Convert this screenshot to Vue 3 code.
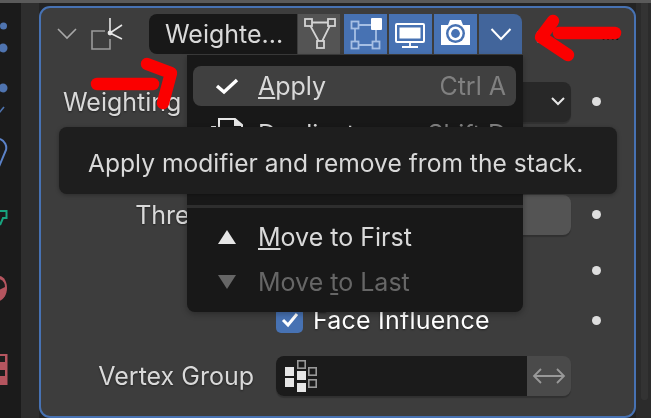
<template>
  <div class="screen">
    <div class="topline"></div>
    <div class="main">
      <div class="tabs">
        <svg width="21" height="415" viewBox="0 3 21 415">
          <circle cx="3.5" cy="26" r="3.5" fill="#4f74b0" />
          <circle cx="3" cy="48" r="4.5" fill="#4f74b0" />
          <circle cx="3" cy="88" r="4.5" fill="#4f74b0" />
          <path d="M-1 113 L4 107" fill="none" stroke="#4f74b0" stroke-width="1.6" />
          <path d="M-2 169 L6 150 C7 146 5 141 0 139" fill="none" stroke="#5b82c8" stroke-width="2" />
          <path d="M-1 211 H6.5 V218 H3 L0 225" fill="none" stroke="#18a47f" stroke-width="2" />
          <path d="M-1 276 C4 276 7 282 7 288 C7 295 3 300 -1 301 Z" fill="#b5555f" />
          <path d="M-1 279 C3 280 5 283 5 287 L-1 290 Z" fill="#1d1d1d" />
          <path d="M0 354 H7.5 V385 H0 Z" fill="#b5555f" />
          <path d="M0 356 H5 V362 H0 Z M0 370 H5 V376 H0 Z" fill="#1d1d1d" />
        </svg>
      </div>
      <div class="gutter"></div>
      <div class="panel">
        <header class="head">
          <svg class="chevron" width="20" height="12" viewBox="0 0 20 12">
            <path d="M1 1 L10 10 L19 1" fill="none" stroke="#a8a8a8" stroke-width="1.6" />
          </svg>
          <svg class="mod-icon" width="34" height="34" viewBox="0 0 34 34">
            <path d="M15 14 H2 V32 H20 V22" fill="none" stroke="#9a9a9a" stroke-width="1.6" />
            <path d="M20 1 V16 M20 16 L32 8 M20 16 L32 22" fill="none" stroke="#e6e6e6" stroke-width="1.6" />
            <circle cx="20" cy="16" r="2.4" fill="#e6e6e6" />
          </svg>
          <div class="name">Weighte...</div>
          <div class="modes">
            <button class="mode first">
              <svg width="34" height="34" viewBox="0 0 34 34">
                <path d="M6.5 5.5 H29.5 L18.5 27.5 Z" fill="none" stroke="#d4d4d4" stroke-width="1.8" />
                <rect x="3" y="2" width="7" height="7" fill="#545454" stroke="#d4d4d4" stroke-width="1.8" />
                <rect x="26" y="2" width="7" height="7" fill="#545454" stroke="#d4d4d4" stroke-width="1.8" />
                <rect x="15" y="24" width="7" height="7" fill="#545454" stroke="#d4d4d4" stroke-width="1.8" />
              </svg>
            </button>
            <button class="mode on">
              <svg width="34" height="34" viewBox="0 0 34 34">
                <path d="M10 8 H22 M6 12 V24 M10 28 H23 M27 13 V24" fill="none" stroke="#a6bfe4" stroke-width="1.8" />
                <rect x="2.5" y="4.5" width="7" height="7" fill="#4772b3" stroke="#a6bfe4" stroke-width="1.8" />
                <rect x="2.5" y="24.5" width="7" height="7" fill="#4772b3" stroke="#a6bfe4" stroke-width="1.8" />
                <rect x="23.5" y="24.5" width="7" height="7" fill="#4772b3" stroke="#a6bfe4" stroke-width="1.8" />
                <rect x="22" y="1" width="11" height="12" rx="1" fill="#fff" />
              </svg>
            </button>
            <button class="mode on">
              <svg width="34" height="34" viewBox="0 0 34 34">
                <rect x="2" y="7" width="28" height="18" rx="1" fill="none" stroke="#fff" stroke-width="2" />
                <rect x="5.5" y="10.5" width="21" height="11" fill="#fff" />
                <path d="M16 25 V29 M8 30 H24" stroke="#fff" stroke-width="1.8" />
              </svg>
            </button>
            <button class="mode on">
              <svg width="34" height="34" viewBox="0 0 34 34">
                <path fill="#fff" d="M2 8 H9 L11 3 H22 L24 8 H31 V28 H2 Z" />
                <circle cx="16.5" cy="16.5" r="9.5" fill="#4772b3" />
                <circle cx="16.5" cy="16.5" r="7" fill="#fff" />
                <circle cx="16.5" cy="16.5" r="4.4" fill="#4772b3" />
              </svg>
            </button>
            <button class="mode more">
              <svg width="22" height="14" viewBox="0 0 22 14">
                <path d="M1.5 2 L11 12 L20.5 2" fill="none" stroke="#fff" stroke-width="2" />
              </svg>
            </button>
          </div>
          <span class="close">×</span>
          <span class="grip">::::</span>
        </header>

        <div class="rows">
          <div class="row r-select">
            <label>Weighting</label>
            <div class="control select">
              <svg width="14" height="9" viewBox="0 0 14 9">
                <path d="M1 1 L7 7 L13 1" fill="none" stroke="#e6e6e6" stroke-width="2" />
              </svg>
            </div>
            <i class="dot"></i>
          </div>
          <div class="row r-hidden"></div>
          <div class="row r-thresh">
            <label>Threshold</label>
            <div class="control slider"></div>
            <i class="dot"></i>
          </div>
          <div class="row r-keep">
            <i class="dot"></i>
          </div>
          <div class="row r-face">
            <label></label>
            <div class="control check-row">
              <span class="check">
                <svg width="18" height="16" viewBox="0 0 18 16">
                  <path d="M2 8 L7 13 L16 2" fill="none" stroke="#fff" stroke-width="3" />
                </svg>
              </span>
              <span class="check-label">Face Influence</span>
            </div>
            <i class="dot"></i>
          </div>
          <div class="row r-group">
            <label>Vertex Group</label>
            <div class="control group">
              <div class="group-field">
                <svg width="34" height="34" viewBox="0 0 34 34">
                  <rect x="13.8" y="1.8" width="7.4" height="7.4" fill="none" stroke="#999" stroke-width="1.6" />
                  <rect x="24.8" y="8.8" width="7.4" height="7.4" fill="none" stroke="#999" stroke-width="1.6" />
                  <rect x="24.8" y="20.8" width="7.4" height="7.4" fill="none" stroke="#999" stroke-width="1.6" />
                  <rect x="1" y="8" width="9" height="9" fill="#e6e6e6" />
                  <rect x="1" y="19" width="9" height="9" fill="#e6e6e6" />
                  <rect x="13" y="12" width="9" height="9" fill="#e6e6e6" />
                  <rect x="13" y="24" width="9" height="9" fill="#e6e6e6" />
                </svg>
              </div>
              <div class="invert">
                <svg width="34" height="18" viewBox="0 0 34 18">
                  <path d="M2 9 H32 M9 2 L2 9 L9 16 M25 2 L32 9 L25 16" fill="none" stroke="#999" stroke-width="1.8" />
                </svg>
              </div>
            </div>
          </div>
        </div>
      </div>
      <div class="scrollbar"><div class="thumb"></div></div>
    </div>

    <!-- popup menu over the panel -->
    <div class="menu">
      <div class="item active">
        <svg class="item-icon" width="24" height="18" viewBox="0 0 24 18">
          <path d="M2 9 L9 15 L22 3" fill="none" stroke="#fff" stroke-width="3.4" />
        </svg>
        <span class="item-text"><u>A</u>pply</span>
        <span class="shortcut">Ctrl A</span>
      </div>
      <div class="item">
        <svg class="item-icon dup" width="24" height="26" viewBox="0 0 24 26">
          <path d="M4 22 V-2 H20 L27 4 V22" fill="none" stroke="#e6e6e6" stroke-width="2" />
          <path d="M19 -3 L28 5 H19 Z" fill="#e6e6e6" />
          <path d="M1 6 H-3 V22" fill="none" stroke="#e6e6e6" stroke-width="1.8" />
        </svg>
        <span class="item-text">Duplicate</span>
        <span class="shortcut">Shift D</span>
      </div>
      <div class="sep"></div>
      <div class="item move">
        <svg class="item-icon" width="24" height="16" viewBox="0 0 24 16">
          <path d="M3 15 H21 L12 1 Z" fill="#e6e6e6" />
        </svg>
        <span class="item-text"><u>M</u>ove to First</span>
      </div>
      <div class="item off">
        <svg class="item-icon" width="24" height="16" viewBox="0 0 24 16">
          <path d="M3 1 H21 L12 15 Z" fill="#666" />
        </svg>
        <span class="item-text">Move <u>t</u>o Last</span>
      </div>
    </div>

    <div class="tooltip">Apply modifier and remove from the stack.</div>

    <!-- red marker arrows drawn on the screenshot -->
    <svg class="marks" width="651" height="418" viewBox="0 0 651 418">
      <g fill="none" stroke="#fb0000" stroke-width="12.5" stroke-linecap="round" stroke-linejoin="round">
        <path d="M97 84 H153" />
        <path d="M147 64 L171 73 L163 103" />
        <path d="M615 33 H559" />
        <path d="M553 21 L541 37 L568 55" />
      </g>
    </svg>
  </div>
</template>

<script setup>
// static screenshot, nothing to wire up
</script>

<style>
html,
body {
  margin: 0;
  background: #1d1d1d;
}
</style>

<style scoped>
.screen {
  position: relative;
  width: 651px;
  height: 418px;
  overflow: hidden;
  font-family: Inter, "Liberation Sans", sans-serif;
  font-size: 25px;
  color: #d9d9d9;
  background: #232323;
  filter: blur(0.5px);
}

.topline {
  height: 3px;
  background: #5a5a5a;
}

.main {
  display: flex;
  height: 415px;
}

.tabs {
  width: 21px;
  background: #1b1b1b;
  flex: none;
}

.tabs svg {
  display: block;
}

.gutter {
  width: 18px;
  background: #2e2e2e;
  flex: none;
}

.panel {
  width: 597px;
  height: 412px;
  margin-top: 3px;
  box-sizing: border-box;
  border: 2px solid #4772b3;
  border-radius: 11px;
  background: #3d3d3d;
  flex: none;
}

.scrollbar {
  flex: 1;
  padding: 0 3px 0 5px;
  background: #2b2b2b;
}

.thumb {
  height: 397px;
  background: #333;
  border-radius: 0 0 3px 3px;
}

.head {
  display: flex;
  align-items: center;
  height: 40px;
  margin-top: 6px;
  padding-left: 16px;
}

.chevron {
  flex: none;
}

.mod-icon {
  margin-left: 13px;
  flex: none;
}

.name {
  width: 148px;
  height: 40px;
  margin-left: 25px;
  line-height: 40px;
  padding-left: 16px;
  box-sizing: border-box;
  background: #181818;
  border-radius: 8px 0 0 8px;
  flex: none;
}

.modes {
  display: flex;
  gap: 2px;
  height: 40px;
}

.mode {
  display: flex;
  align-items: center;
  justify-content: center;
  width: 43px;
  padding: 0;
  border: 0;
  background: #545454;
}

.mode.first {
  width: 42px;
  margin: 0 2px 0 1px;
}

.mode.on {
  background: #4772b3;
}

.mode.more {
  background: #42659b;
  border-radius: 0 8px 0 0;
}

.close {
  margin-left: 12px;
  font-size: 26px;
  color: #a8a8a8;
}

.grip {
  margin-left: 50px;
  font-size: 16px;
  color: #111;
}

.row {
  display: flex;
  align-items: center;
  text-shadow: 0 1px 2px rgba(0, 0, 0, 0.45);
}

.row label {
  width: 213px;
  margin-right: 22px;
  text-align: right;
  flex: none;
}

.control {
  width: 295px;
  height: 40px;
  border-radius: 8px;
  box-shadow: 0 2px 1px rgba(0, 0, 0, 0.2);
  flex: none;
}

.dot {
  width: 9px;
  height: 9px;
  margin-left: 21px;
  border-radius: 50%;
  background: #dedede;
  flex: none;
}

.r-select {
  height: 41px;
  margin-top: 27px;
}

.r-select label {
  box-sizing: border-box;
  padding-left: 22px;
  text-align: left;
}

.select {
  display: flex;
  align-items: center;
  justify-content: flex-end;
  padding-right: 6px;
  box-sizing: border-box;
  background: #282828;
}

.r-hidden {
  height: 72px;
}

.r-thresh {
  height: 41px;
}

.slider {
  background: #545454;
}

.r-keep {
  height: 70px;
}

.r-keep .dot {
  margin-left: 551px;
}

.r-face {
  height: 30px;
}

.check-row {
  display: flex;
  align-items: center;
  height: 30px;
  box-shadow: none;
  color: #fff;
}

.check {
  display: flex;
  align-items: center;
  justify-content: center;
  width: 27px;
  height: 25px;
  background: #4772b3;
  border-radius: 5px;
}

.check-label {
  margin-left: 10px;
  letter-spacing: 0.2px;
}

.r-group {
  height: 40px;
  margin-top: 21px;
}

.group {
  display: flex;
  overflow: hidden;
}

.group-field {
  display: flex;
  align-items: center;
  width: 251px;
  padding-left: 8px;
  box-sizing: border-box;
  background: #1b1b1b;
}

.invert {
  display: flex;
  align-items: center;
  justify-content: center;
  flex: 1;
  background: #4a4a4a;
}

.menu {
  position: absolute;
  left: 187px;
  top: 55px;
  width: 336px;
  height: 257px;
  padding: 11px 7px 0 6px;
  box-sizing: border-box;
  background: #181818;
  border-radius: 0 0 8px 8px;
  box-shadow: 0 2px 6px rgba(0, 0, 0, 0.3);
}

.item {
  display: flex;
  align-items: center;
  height: 40px;
  padding: 0 10px 0 22px;
  border-radius: 8px;
  margin-bottom: 5px;
}

.item.active {
  background: #404040;
  margin-bottom: 8px;
}

.item-icon {
  flex: none;
}

.item-icon.dup {
  overflow: visible;
}

.item-text {
  margin-left: 19px;
}

.shortcut {
  margin-left: auto;
  color: #808080;
}

.sep {
  height: 3px;
  margin: 51px -7px 9px -6px;
  background: #2e2e2e;
}

.item.off {
  color: #666;
}

.tooltip {
  position: absolute;
  left: 59px;
  top: 127px;
  width: 558px;
  height: 67px;
  padding-left: 29px;
  box-sizing: border-box;
  line-height: 72px;
  font-size: 24.6px;
  background: #1e1e1e;
  border-radius: 8px;
  box-shadow: 0 1px 4px rgba(0, 0, 0, 0.3);
}

.marks {
  position: absolute;
  left: 0;
  top: 0;
}
</style>
